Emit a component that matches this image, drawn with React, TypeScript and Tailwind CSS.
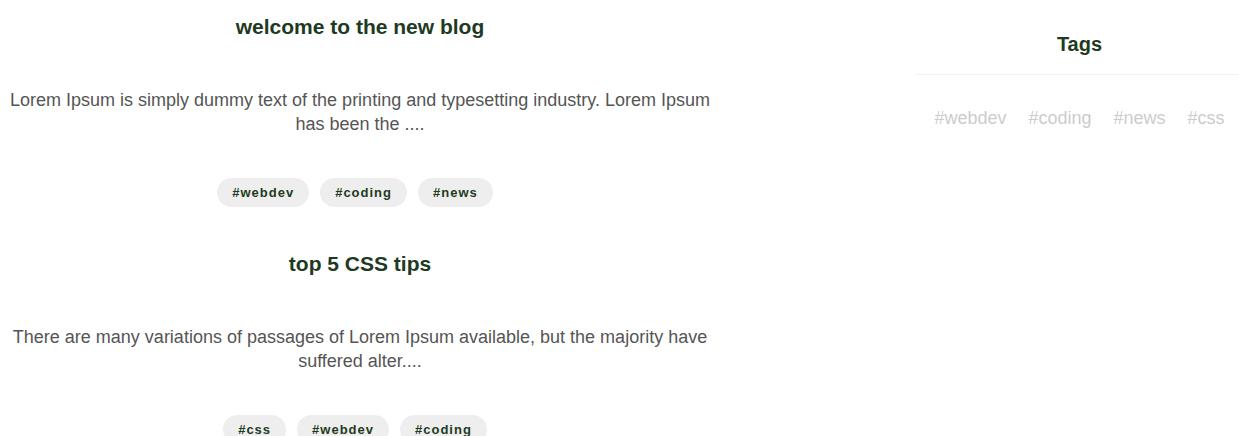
import React from "react";

type Post = { title: string; body: string; tags: string[] };

const posts: Post[] = [
  {
    title: "welcome to the new blog",
    body: "Lorem Ipsum is simply dummy text of the printing and typesetting industry. Lorem Ipsum has been the ....",
    tags: ["#webdev", "#coding", "#news"],
  },
  {
    title: "top 5 CSS tips",
    body: "There are many variations of passages of Lorem Ipsum available, but the majority have suffered alter....",
    tags: ["#css", "#webdev", "#coding"],
  },
];

const allTags = ["#webdev", "#coding", "#news", "#css"];

function PostCard({ post }: { post: Post }) {
  return (
    <article className="flex flex-col items-center text-center">
      <h2 className="text-[21px] leading-[28px] font-bold text-[#1e3a22]">{post.title}</h2>
      <p className="mt-[47px] text-[18px] leading-[24px] text-[#555555]">{post.body}</p>
      <div className="mt-[42px] pr-[10px] flex gap-[11px]">
        {post.tags.map((t) => (
          <span
            key={t}
            className="rounded-full bg-[#eeeeee] px-[15px] h-[29px] flex items-center text-[13px] font-bold tracking-[1px] text-[#1e3a22]"
          >
            {t}
          </span>
        ))}
      </div>
    </article>
  );
}

export default function App() {
  return (
    <div
      className="w-[1239px] h-[436px] overflow-hidden bg-white flex"
      style={{ fontFamily: '"Liberation Sans", Arial, sans-serif' }}
    >
      <main className="w-[720px] pt-[13px] flex flex-col gap-[43px]">
        {posts.map((p) => (
          <PostCard key={p.title} post={p} />
        ))}
      </main>
      <aside className="ml-auto w-[323px] pt-[30px]">
        <h3 className="pl-[4px] text-center text-[20px] leading-[28px] font-bold text-[#1e3a22]">Tags</h3>
        <div className="mt-[16px] border-t border-[#f2f2f2]" />
        <div className="mt-[31px] pl-[4px] flex justify-center gap-[22px] text-[18px] leading-[24px] text-[#cccccc]">
          {allTags.map((t) => (
            <span key={t}>{t}</span>
          ))}
        </div>
      </aside>
    </div>
  );
}
